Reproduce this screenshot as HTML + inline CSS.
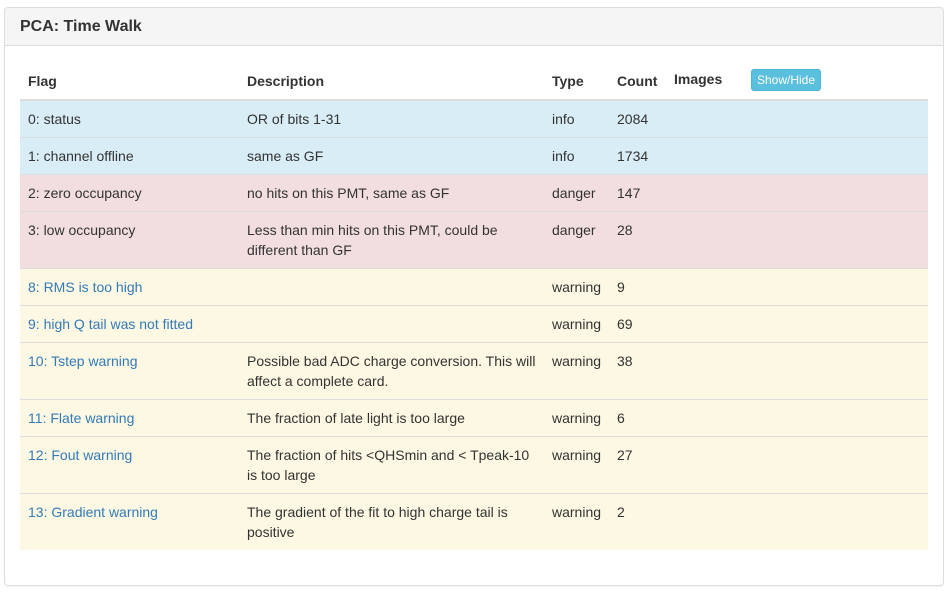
<!DOCTYPE html>
<html><head><style>
body{margin:0;background:#fff;font-family:"Liberation Sans",sans-serif;font-size:14px;color:#333;}
.panel{position:absolute;left:4px;top:7px;width:938px;height:577px;border:1px solid #ddd;border-radius:4px;box-shadow:0 1px 1px rgba(0,0,0,.05);}
.ph{height:37px;background:#f5f5f5;border-bottom:1px solid #ddd;border-radius:3px 3px 0 0;}
.ph h3{margin:0;padding:9px 15px 0;font-size:16px;font-weight:bold;line-height:20px;color:#333;}
table{position:absolute;left:15px;top:55px;width:908px;border-collapse:collapse;table-layout:fixed;}
th,td{padding:8px;line-height:20px;text-align:left;vertical-align:top;}
th{border-bottom:2px solid #ddd;vertical-align:bottom;font-weight:bold;position:relative;}
td{border-top:1px solid #ddd;}
tr.i td{background:#d9edf7}tr.d td{background:#f2dede}tr.w td{background:#fcf8e3}
a{color:#337ab7;text-decoration:none}
.btn{position:absolute;left:85px;top:6px;width:68px;height:20px;background:#5bc0de;border:1px solid #46b8da;border-radius:3px;color:#fff;font-size:12px;font-weight:normal;line-height:20px;text-align:center;}
</style></head><body>
<div class="panel"><div class="ph"><h3>PCA: Time Walk</h3></div>
<table>
<colgroup><col style="width:219px"><col style="width:305px"><col style="width:65px"><col style="width:57px"><col></colgroup>
<tr><th>Flag</th><th>Description</th><th>Type</th><th>Count</th><th><span style="position:relative;top:-2px">Images</span><span class="btn">Show/Hide</span></th></tr>
<tr class="i"><td>0: status</td><td>OR of bits 1-31</td><td>info</td><td>2084</td><td></td></tr>
<tr class="i"><td>1: channel offline</td><td>same as GF</td><td>info</td><td>1734</td><td></td></tr>
<tr class="d"><td>2: zero occupancy</td><td>no hits on this PMT, same as GF</td><td>danger</td><td>147</td><td></td></tr>
<tr class="d"><td>3: low occupancy</td><td>Less than min hits on this PMT, could be different than GF</td><td>danger</td><td>28</td><td></td></tr>
<tr class="w"><td><a>8: RMS is too high</a></td><td></td><td>warning</td><td>9</td><td></td></tr>
<tr class="w"><td><a>9: high Q tail was not fitted</a></td><td></td><td>warning</td><td>69</td><td></td></tr>
<tr class="w"><td><a>10: Tstep warning</a></td><td>Possible bad ADC charge conversion. This will affect a complete card.</td><td>warning</td><td>38</td><td></td></tr>
<tr class="w"><td><a>11: Flate warning</a></td><td>The fraction of late light is too large</td><td>warning</td><td>6</td><td></td></tr>
<tr class="w"><td><a>12: Fout warning</a></td><td>The fraction of hits &lt;QHSmin and &lt; Tpeak-10 is too large</td><td>warning</td><td>27</td><td></td></tr>
<tr class="w"><td><a>13: Gradient warning</a></td><td>The gradient of the fit to high charge tail is positive</td><td>warning</td><td>2</td><td></td></tr>
</table></div>
</body></html>
